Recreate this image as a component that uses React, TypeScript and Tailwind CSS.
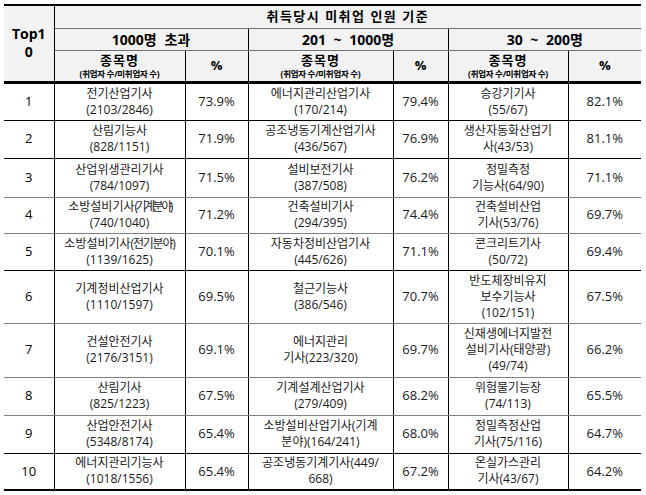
import React from 'react';

type Cell = { name: React.ReactNode; pct: string };
type Row = { rank: number; cells: Cell[]; h: string; line: string };

const squeeze = (t: string) => <span className="tracking-[-2.5px]">{t}</span>;

const rows: Row[] = [
  {
    rank: 1,
    h: 'h-[38px]',
    line: 'border-b-black',
    cells: [
      { name: <>전기산업기사<br />(2103/2846)</>, pct: '73.9%' },
      { name: <>에너지관리산업기사<br />(170/214)</>, pct: '79.4%' },
      { name: <>승강기기사<br />(55/67)</>, pct: '82.1%' },
    ],
  },
  {
    rank: 2,
    h: 'h-[38px]',
    line: 'border-b-black',
    cells: [
      { name: <>산림기능사<br />(828/1151)</>, pct: '71.9%' },
      { name: <>공조냉동기계산업기사<br />(436/567)</>, pct: '76.9%' },
      { name: <>생산자동화산업기<br />사(43/53)</>, pct: '81.1%' },
    ],
  },
  {
    rank: 3,
    h: 'h-[39px]',
    line: 'border-b-[#808080]',
    cells: [
      { name: <>산업위생관리기사<br />(784/1097)</>, pct: '71.5%' },
      { name: <>설비보전기사<br />(387/508)</>, pct: '76.2%' },
      { name: <>정밀측정<br />기능사(64/90)</>, pct: '71.1%' },
    ],
  },
  {
    rank: 4,
    h: 'h-[36px]',
    line: 'border-b-[#808080]',
    cells: [
      { name: <>소방설비기사{squeeze('(기계분야)')}<br />(740/1040)</>, pct: '71.2%' },
      { name: <>건축설비기사<br />(294/395)</>, pct: '74.4%' },
      { name: <>건축설비산업<br />기사(53/76)</>, pct: '69.7%' },
    ],
  },
  {
    rank: 5,
    h: 'h-[37px]',
    line: 'border-b-black',
    cells: [
      { name: <>소방설비기사<span className="tracking-[-1.2px]">(전기분야)</span><br />(1139/1625)</>, pct: '70.1%' },
      { name: <>자동차정비산업기사<br />(445/626)</>, pct: '71.1%' },
      { name: <>콘크리트기사<br />(50/72)</>, pct: '69.4%' },
    ],
  },
  {
    rank: 6,
    h: 'h-[53px]',
    line: 'border-b-[#808080]',
    cells: [
      { name: <>기계정비산업기사<br />(1110/1597)</>, pct: '69.5%' },
      { name: <>철근기능사<br />(386/546)</>, pct: '70.7%' },
      { name: <>반도체장비유지<br />보수기능사<br />(102/151)</>, pct: '67.5%' },
    ],
  },
  {
    rank: 7,
    h: 'h-[54px]',
    line: 'border-b-[#808080]',
    cells: [
      { name: <>건설안전기사<br />(2176/3151)</>, pct: '69.1%' },
      { name: <>에너지관리<br />기사(223/320)</>, pct: '69.7%' },
      { name: <>신재생에너지발전<br />설비기사(태양광)<br />(49/74)</>, pct: '66.2%' },
    ],
  },
  {
    rank: 8,
    h: 'h-[38px]',
    line: 'border-b-[#808080]',
    cells: [
      { name: <>산림기사<br />(825/1223)</>, pct: '67.5%' },
      { name: <>기계설계산업기사<br />(279/409)</>, pct: '68.2%' },
      { name: <>위험물기능장<br />(74/113)</>, pct: '65.5%' },
    ],
  },
  {
    rank: 9,
    h: 'h-[38px]',
    line: 'border-b-black',
    cells: [
      { name: <>산업안전기사<br />(5348/8174)</>, pct: '65.4%' },
      { name: <>소방설비산업기사(기계<br />분야)(164/241)</>, pct: '68.0%' },
      { name: <>정밀측정산업<br />기사(75/116)</>, pct: '64.7%' },
    ],
  },
  {
    rank: 10,
    h: 'h-[37px]',
    line: 'border-b-black border-b-2',
    cells: [
      { name: <>에너지관리기능사<br />(1018/1556)</>, pct: '65.4%' },
      { name: <>공조냉동기계기사(449/<br />668)</>, pct: '67.2%' },
      { name: <>온실가스관리<br />기사(43/67)</>, pct: '64.2%' },
    ],
  },
];

const groups = ['1000명 초과', '201 ~ 1000명', '30 ~ 200명'];

export default function App() {
  return (
    <div className="h-[495px] w-[646px] bg-white pl-[4px] pt-[4px] font-['Open_Sans','Noto_Sans_CJK_KR',sans-serif] text-black">
      <table className="w-[637px] table-fixed border-collapse border-t-2 border-t-black">
        <colgroup>
          <col className="w-[50px]" />
          <col className="w-[131px]" />
          <col className="w-[63px]" />
          <col className="w-[145px]" />
          <col className="w-[55px]" />
          <col className="w-[120px]" />
          <col className="w-[73px]" />
        </colgroup>
        <thead className="bg-[#f2f2f2]">
          <tr className="h-[23px]">
            <th
              rowSpan={3}
              className="border-r border-b-[3px] border-r-black border-b-black p-0 text-[14px] font-bold leading-[18px]"
            >
              Top1
              <br />0
            </th>
            <th colSpan={6} className="border-b border-b-[#707070] p-0 text-[13px] font-bold tracking-[1.5px]">
              취득당시 미취업 인원 기준
            </th>
          </tr>
          <tr className="h-[22px]">
            {groups.map((g, i) => (
              <th
                key={g}
                colSpan={2}
                className={`border-b border-b-[#707070] p-0 text-[14px] font-bold [word-spacing:4px] ${i < 2 ? 'border-r border-r-black' : ''}`}
              >
                {g}
              </th>
            ))}
          </tr>
          <tr className="h-[32px]">
            {groups.map((g, i) => (
              <React.Fragment key={g}>
                <th className="border-r border-b-[3px] border-r-black border-b-black p-0">
                  <div className="text-[13px] font-bold leading-[15px] tracking-[1px]">종목명</div>
                  <div className="text-[8.5px] font-bold leading-[11px] tracking-[-0.3px]">(취업자 수/미취업자 수)</div>
                </th>
                <th
                  className={`border-b-[3px] border-b-black p-0 text-[13px] font-bold ${i < 2 ? 'border-r border-r-black' : ''}`}
                >
                  %
                </th>
              </React.Fragment>
            ))}
          </tr>
        </thead>
        <tbody>
          {rows.map((r) => (
            <tr key={r.rank} className={r.h}>
              <td className={`border-r border-b border-r-black p-0 text-center text-[13px] ${r.line}`}>{r.rank}</td>
              {r.cells.map((c, i) => (
                <React.Fragment key={i}>
                  <td className={`border-r border-b border-r-black p-0 text-center text-[12px] leading-[16px] text-[#1a1a1a] ${r.line}`}>
                    {c.name}
                  </td>
                  <td
                    className={`border-b p-0 text-center text-[13px] text-[#1a1a1a] ${r.line} ${i < 2 ? 'border-r border-r-black' : ''}`}
                  >
                    {c.pct}
                  </td>
                </React.Fragment>
              ))}
            </tr>
          ))}
        </tbody>
      </table>
    </div>
  );
}
